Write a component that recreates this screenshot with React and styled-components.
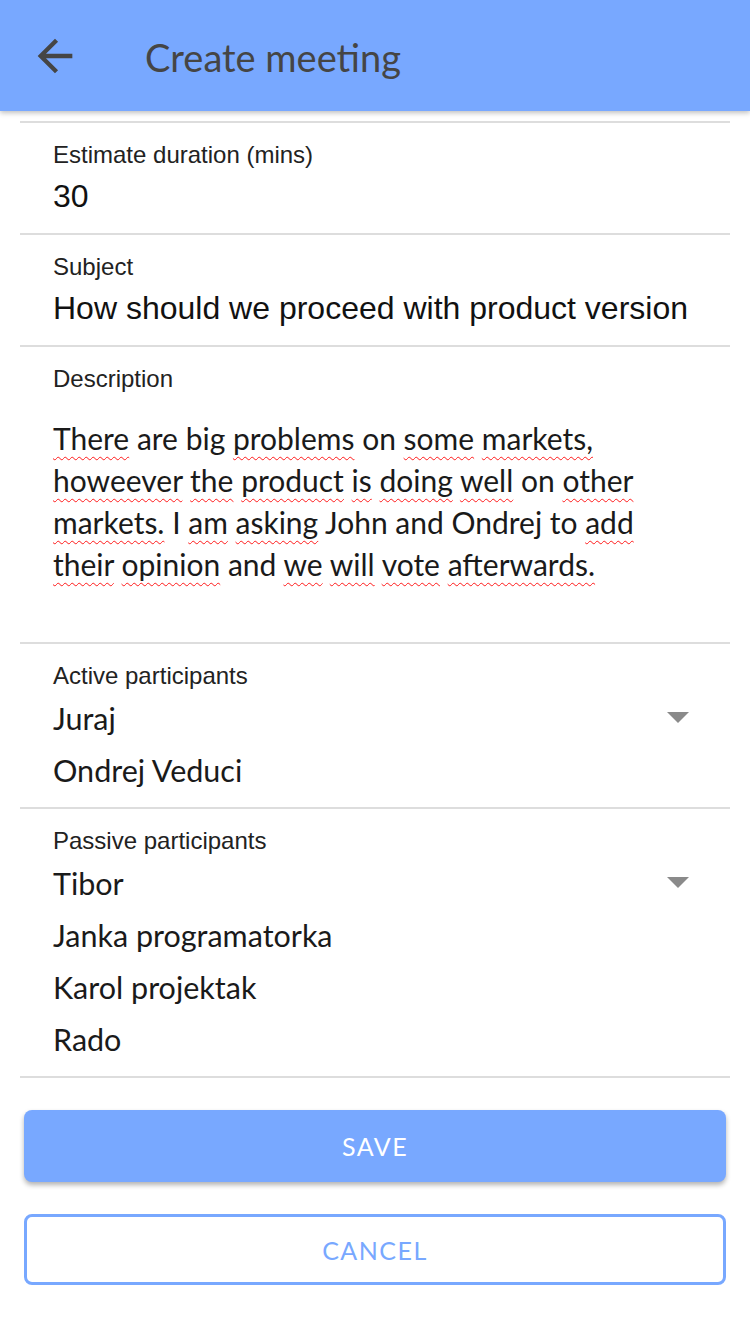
import styled, {createGlobalStyle} from 'styled-components'

const GlobalStyle = createGlobalStyle`
  html, body {
    margin: 0;
    padding: 0;
    background: #ffffff;
  }
  * {
    box-sizing: border-box;
  }
`

const Page = styled.div`
  width: 750px;
  min-height: 1334px;
  background: #ffffff;
  font-family: "Liberation Sans", Arial, sans-serif;
`

const Header = styled.header`
  height: 111px;
  background: #78a8ff;
  display: flex;
  align-items: center;
  box-shadow: 0 2px 5px rgba(0, 0, 0, 0.25);
  position: relative;
  z-index: 1;
`

const BackButton = styled.button`
  border: none;
  background: transparent;
  padding: 0;
  margin-left: 29px;
  width: 52px;
  height: 52px;
  display: flex;
  align-items: center;
  justify-content: center;
  color: #454545;
`

const Title = styled.h1`
  margin: 2px 0 0 64px;
  font-family: Lato, "Open Sans", sans-serif;
  font-weight: 400;
  font-size: 38px;
  color: #454545;
`

const Form = styled.div`
  margin: 10px 20px 0;
  border-top: 2px solid #dddddd;
`

const Row = styled.div`
  border-bottom: 2px solid #dddddd;
  padding: 18px 33px ${props => props.bottom || 18}px;
`

const Label = styled.div`
  font-size: 24px;
  line-height: 28px;
  color: #222222;
`

const Value = styled.div`
  margin-top: 8px;
  font-size: 32px;
  line-height: 38px;
  color: #111111;
  white-space: nowrap;
  overflow: hidden;
`

const Description = styled.div`
  margin: 24px 0 39px;
  font-family: Lato, "Open Sans", sans-serif;
  font-size: 30px;
  line-height: 42px;
  color: #1a1a1a;
`

const Line = styled.div`
  white-space: nowrap;
`

const Misspelled = styled.span`
  text-decoration: underline wavy #ff1a1a;
  text-decoration-thickness: 1px;
  text-underline-offset: 6px;
`

const SelectBody = styled.div`
  display: flex;
  align-items: flex-start;
  margin-top: 2px;
`

const Options = styled.div`
  flex: 1;
  font-family: Lato, "Open Sans", sans-serif;
  font-size: 30.5px;
  line-height: 52px;
  color: #1a1a1a;
`

const Arrow = styled.div`
  margin: 20px 8px 0 0;
  width: 0;
  height: 0;
  border-left: 11px solid transparent;
  border-right: 11px solid transparent;
  border-top: 11px solid #8a8a8a;
`

const Actions = styled.div`
  padding: 32px 24px 0;
  display: flex;
  flex-direction: column;
  gap: 32px;
`

const ActionButton = styled.button`
  height: ${props => props.outlined ? 71 : 72}px;
  border-radius: 8px;
  font-family: Lato, "Open Sans", sans-serif;
  font-size: 25px;
  letter-spacing: 1.5px;
  text-transform: uppercase;
  background: ${props => props.outlined ? '#ffffff' : '#78a8ff'};
  color: ${props => props.outlined ? '#78a8ff' : '#ffffff'};
  border: ${props => props.outlined ? '3px solid #78a8ff' : 'none'};
  box-shadow: ${props => props.outlined ? 'none' : '0 3px 5px rgba(0, 0, 0, 0.3)'};
`

const descriptionLines = [
    [['There', 1], ['are', 0], ['big', 0], ['problems', 1], ['on', 0], ['some', 1], ['markets,', 1]],
    [['howeever', 1], ['the', 1], ['product', 1], ['is', 1], ['doing', 1], ['well', 1], ['on', 0], ['other', 1]],
    [['markets.', 1], ['I', 0], ['am', 1], ['asking', 1], ['John', 0], ['and', 0], ['Ondrej', 0], ['to', 0], ['add', 1]],
    [['their', 1], ['opinion', 1], ['and', 0], ['we', 1], ['will', 1], ['vote', 1], ['afterwards.', 1]],
]

const SelectRow = ({label, options}) => (
    <Row bottom={11}>
        <Label>{label}</Label>
        <SelectBody>
            <Options>
                {options.map(option => <div key={option}>{option}</div>)}
            </Options>
            <Arrow/>
        </SelectBody>
    </Row>
)

const App = () => {
    return (
        <Page>
            <GlobalStyle/>
            <Header>
                <BackButton>
                    <svg width="52" height="52" viewBox="0 0 24 24" fill="currentColor">
                        <path d="M20 11H7.83l5.59-5.59L12 4l-8 8 8 8 1.41-1.41L7.83 13H20v-2z"/>
                    </svg>
                </BackButton>
                <Title>Create meeting</Title>
            </Header>
            <Form>
                <Row>
                    <Label>Estimate duration (mins)</Label>
                    <Value>30</Value>
                </Row>
                <Row>
                    <Label>Subject</Label>
                    <Value>How should we proceed with product version</Value>
                </Row>
                <Row>
                    <Label>Description</Label>
                    <Description>
                        {descriptionLines.map((words, i) => (
                            <Line key={i}>
                                {words.map(([word, wrong], j) => (
                                    <span key={j}>
                                        {wrong ? <Misspelled>{word}</Misspelled> : word}
                                        {j < words.length - 1 ? ' ' : ''}
                                    </span>
                                ))}
                            </Line>
                        ))}
                    </Description>
                </Row>
                <SelectRow label="Active participants" options={['Juraj', 'Ondrej Veduci']}/>
                <SelectRow label="Passive participants" options={['Tibor', 'Janka programatorka', 'Karol projektak', 'Rado']}/>
            </Form>
            <Actions>
                <ActionButton>Save</ActionButton>
                <ActionButton outlined>Cancel</ActionButton>
            </Actions>
        </Page>
    )
}

export default App
